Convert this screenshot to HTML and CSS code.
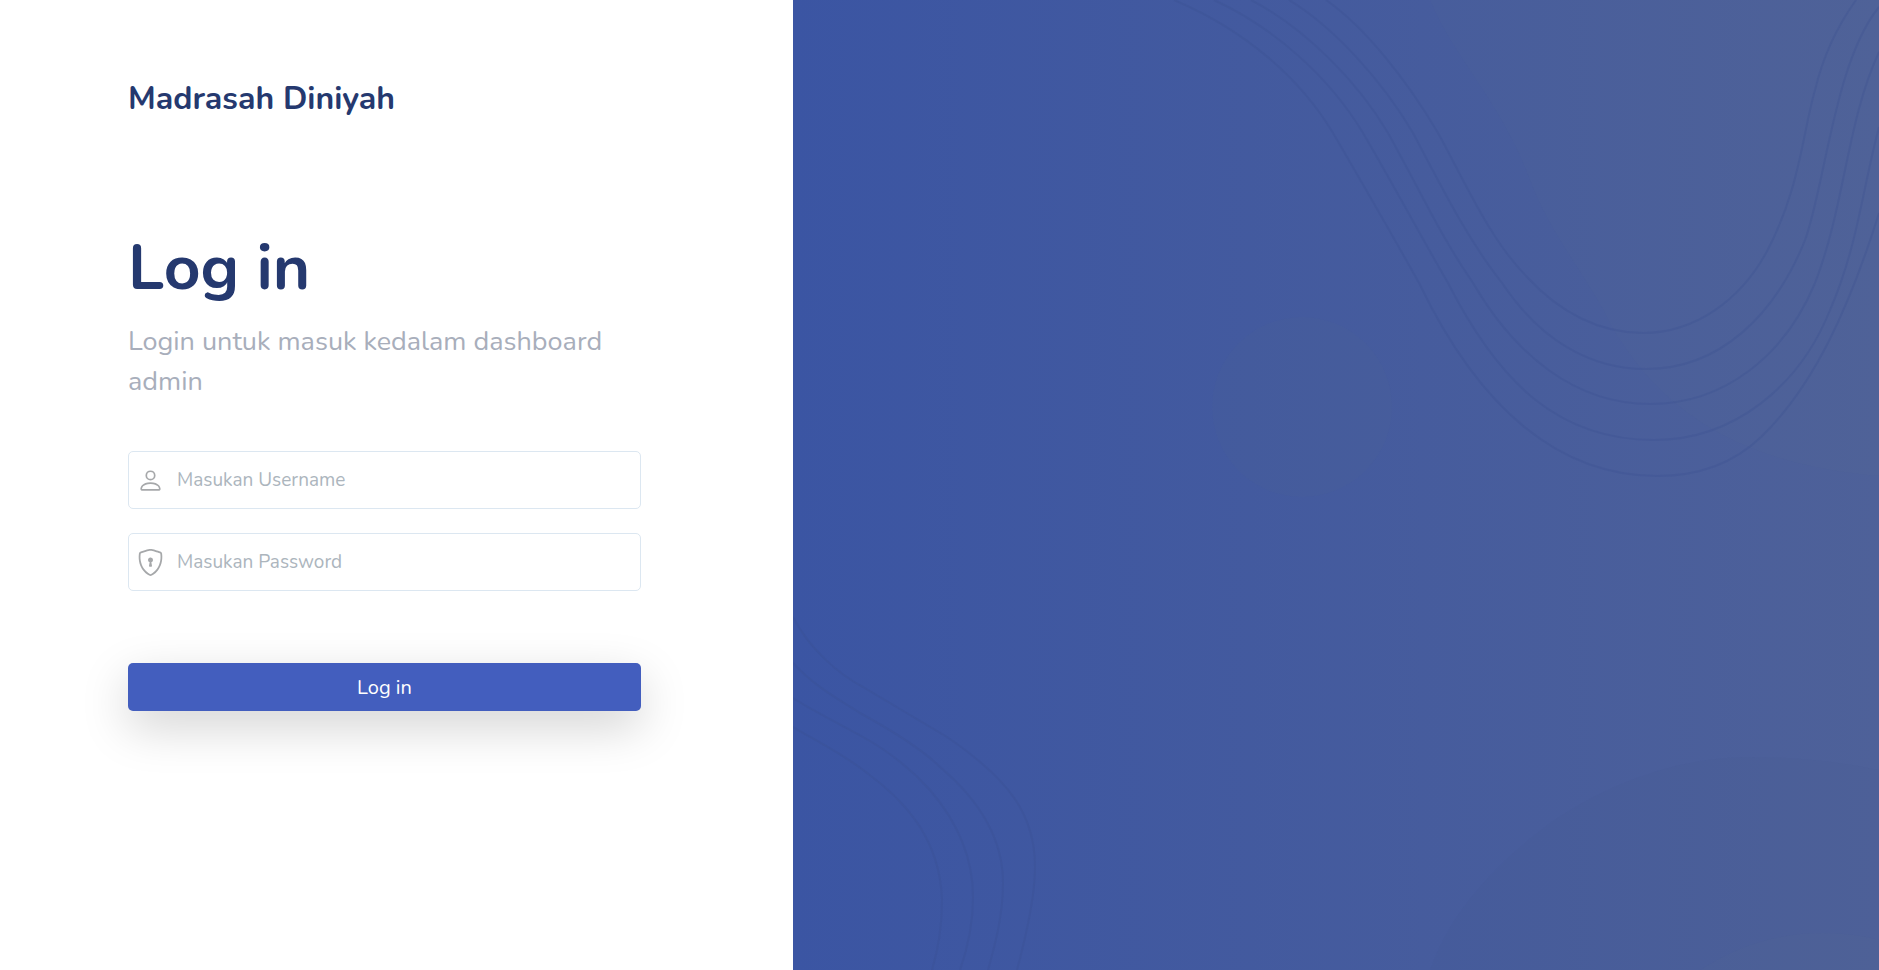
FILE: index.html
```html
<!DOCTYPE html>
<html lang="id">
<head>
<meta charset="utf-8">
<meta name="viewport" content="width=device-width, initial-scale=1">
<title>Madrasah Diniyah</title>
<link rel="stylesheet" href="styles.css">
</head>
<body>
<div class="auth">
  <main class="auth-left">
    <h2 class="brand">Madrasah Diniyah</h2>
    <h1 class="auth-title">Log in</h1>
    <p class="auth-subtitle">Login untuk masuk kedalam dashboard admin</p>
    <form class="auth-form">
      <div class="field">
        <input class="field-input" type="text" name="username" placeholder="Masukan Username" aria-label="Username">
        <svg class="field-icon" viewBox="0 0 16 16" aria-hidden="true"><path d="M8 8a3 3 0 1 0 0-6 3 3 0 0 0 0 6zm2-3a2 2 0 1 1-4 0 2 2 0 0 1 4 0zm4 8c0 1-1 1-1 1H3s-1 0-1-1 1-4 6-4 6 3 6 4zm-1-.004c-.001-.246-.154-.986-.832-1.664C11.516 10.68 10.289 10 8 10c-2.29 0-3.516.68-4.168 1.332-.678.678-.83 1.418-.832 1.664h10z"/></svg>
      </div>
      <div class="field">
        <input class="field-input" type="password" name="password" placeholder="Masukan Password" aria-label="Password">
        <svg class="field-icon" viewBox="0 0 16 16" aria-hidden="true"><path d="M5.338 1.59a61.44 61.44 0 0 0-2.837.856.481.481 0 0 0-.328.39c-.554 4.157.726 7.19 2.253 9.188a10.725 10.725 0 0 0 2.287 2.233c.346.244.652.42.893.533.12.057.218.095.293.118a.55.55 0 0 0 .101.025.615.615 0 0 0 .1-.025c.076-.023.174-.061.294-.118.24-.113.547-.29.893-.533a10.726 10.726 0 0 0 2.287-2.233c1.527-1.997 2.807-5.031 2.253-9.188a.48.48 0 0 0-.328-.39c-.651-.213-1.75-.56-2.837-.855C9.552 1.29 8.531 1.067 8 1.067c-.53 0-1.552.223-2.662.524zM5.072.56C6.157.265 7.31 0 8 0s1.843.265 2.928.56c1.11.3 2.229.655 2.887.87a1.54 1.54 0 0 1 1.044 1.262c.596 4.477-.787 7.795-2.465 9.99a11.775 11.775 0 0 1-2.517 2.453 7.159 7.159 0 0 1-1.048.625c-.28.132-.581.24-.829.24s-.548-.108-.829-.24a7.158 7.158 0 0 1-1.048-.625 11.777 11.777 0 0 1-2.517-2.453C1.928 10.487.545 7.169 1.141 2.692A1.54 1.54 0 0 1 2.185 1.43 62.456 62.456 0 0 1 5.072.56z"/><path d="M9.5 6.5a1.5 1.5 0 0 1-1 1.415l.385 1.99a.5.5 0 0 1-.491.595h-.788a.5.5 0 0 1-.49-.595l.384-1.99a1.5 1.5 0 1 1 2-1.415z"/></svg>
      </div>
      <button class="submit" type="submit">Log in</button>
    </form>
  </main>
  <aside class="auth-right" aria-hidden="true">
    <svg class="waves" viewBox="793 0 1086 970" preserveAspectRatio="none">
      <g class="glow">
        <circle cx="1302" cy="407" r="90"/>
        <path d="M1430 0C1455 60 1500 100 1530 180C1550 235 1590 280 1612 327C1660 410 1740 465 1879 476V0Z"/>
      </g>
      <path class="shade" d="M1430 970C1450 910 1500 860 1550 823C1620 775 1690 757 1750 757C1800 757 1840 762 1879 770V970Z"/>
      <path class="glow" d="M1700 970C1740 944 1780 933 1823 933C1845 933 1865 936 1879 940V970Z"/>
      <g class="line">
        <path d="M1326 0C1366 28 1408 82 1438 133C1464 180 1490 240 1527 277C1560 313 1600 333 1643 333C1695 333 1740 300 1766 253C1800 190 1803 130 1815 90C1824 52 1838 25 1856 0"/>
        <path d="M1289 0C1335 28 1383 82 1413 133C1443 190 1468 240 1502 283C1540 340 1590 369 1646 369C1720 369 1775 315 1805 240C1825 185 1835 60 1879 7"/>
        <path d="M1251 0C1305 28 1358 82 1388 133C1425 200 1440 235 1473 283C1515 355 1575 404 1650 404C1725 404 1785 355 1815 283C1845 205 1847 120 1879 52"/>
        <path d="M1214 0C1275 28 1330 78 1363 133C1402 200 1420 235 1448 283C1500 385 1560 440 1654 440C1735 440 1800 385 1830 310C1858 245 1862 190 1879 127"/>
        <path d="M1174 0C1245 30 1300 78 1333 133C1375 205 1395 240 1419 283C1480 410 1560 476 1657 476C1700 476 1735 462 1761 437C1815 385 1850 305 1879 213"/>
      </g>
      <g class="line">
        <path d="M793 617C810 650 840 675 863 687L947 737C1010 780 1035 815 1035 867C1035 900 1025 940 1017 970"/>
        <path d="M793 663C815 687 840 700 860 713C900 735 925 752 940 767C985 805 1003 845 1003 883C1003 915 995 945 988 970"/>
        <path d="M793 698C815 712 840 724 863 737C890 752 912 770 930 790C960 825 973 860 973 897C973 925 967 950 960 970"/>
        <path d="M793 727C820 743 845 755 867 773C900 797 940 835 942 900C942 925 938 950 932 970"/>
      </g>
    </svg>
  </aside>
</div>
</body>
</html>
```
FILE: styles.css
```css
* { box-sizing: border-box; }
body {
  margin: 0;
  background: #fff;
  color: #25396f;
  font-family: Nunito, Lato, "Open Sans", sans-serif;
}
.auth { display: flex; min-height: 100vh; }
.auth-left { flex: 0 0 42.2%; padding: 80px 152px 80px 128px; }
.brand { margin: 0 0 112px; font-size: 32px; line-height: 38px; font-weight: 700; }
.auth-title { margin: 0 0 16px; font-size: 64px; line-height: 76px; font-weight: 700; }
.auth-subtitle { margin: 0 0 49px; font-size: 27px; line-height: 40px; color: #a8aebb; }
.auth-form { display: flex; flex-direction: column; gap: 24px; }
.field { position: relative; }
.field-input {
  display: block;
  width: 100%;
  height: 58px;
  padding: 0 16px 0 48px;
  border: 1px solid #dce7f1;
  border-radius: 5px;
  background: #fff;
  color: #607080;
  font: inherit;
  font-size: 19px;
}
.field-input::placeholder { color: #acb5bd; opacity: 1; }
.field-icon {
  position: absolute;
  left: 9px;
  top: 16px;
  width: 27px;
  height: 27px;
  fill: #a6a8aa;
}
.submit {
  height: 48px;
  margin-top: 48px;
  border: 0;
  border-radius: 5px;
  background: #435ebe;
  box-shadow: 0 16px 48px rgba(0, 0, 0, .175);
  color: #fff;
  font: inherit;
  font-size: 20px;
  cursor: pointer;
}
.auth-right { position: relative; flex: 1; background: linear-gradient(90deg, #3b55a3, #4e6199); }
.waves { position: absolute; inset: 0; width: 100%; height: 100%; }
.glow { fill: #5a7090; fill-opacity: .05; }
.shade { fill: #3c5088; fill-opacity: .06; }
.line { fill: none; stroke: #3a5090; stroke-opacity: .28; stroke-width: 2; }
```
